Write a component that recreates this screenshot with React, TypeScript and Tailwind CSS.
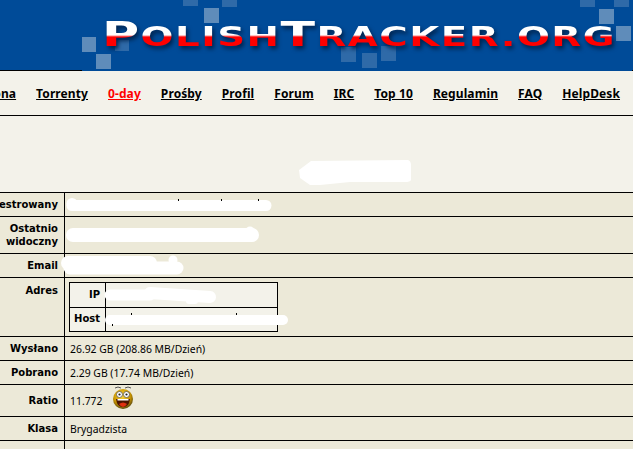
const navItems = ['Strona', 'Torrenty', '0-day', 'Prośby', 'Profil', 'Forum', 'IRC', 'Top 10', 'Regulamin', 'FAQ', 'HelpDesk'];

function HeaderSquares() {
  return (
    <svg className="absolute inset-0" width="633" height="71">
      <g fill="#5f8cba">
        <rect x="82" y="37" width="14" height="15" />
        <rect x="96" y="54" width="15" height="15" />
        <rect x="204" y="8" width="15" height="15" />
        <rect x="599" y="9" width="15" height="15" />
        <rect x="616" y="26" width="15" height="15" />
      </g>
      <g fill="#2f6aa8">
        <rect x="183" y="0" width="15" height="6" />
        <rect x="222" y="0" width="15" height="7" />
        <rect x="580" y="0" width="15" height="7" />
        <rect x="614" y="0" width="15" height="7" />
        <rect x="115" y="40" width="14" height="11" />
        <rect x="341" y="47" width="15" height="15" />
        <rect x="362" y="53" width="15" height="15" />
        <rect x="381" y="46" width="15" height="15" />
      </g>
      <rect x="0" y="70" width="82" height="1" fill="#000" />
      <rect x="632" y="70" width="1" height="1" fill="#000" />
    </svg>
  );
}

// white scribbles that hide the private values
function Scribbles() {
  return (
    <svg className="absolute inset-0" width="633" height="449">
      <path d="M299 170 L311 161 L408 160 Q411 161 411 165 L411 180 Q410 182 405 182 L350 182 L320 185 L310 185 L300 178 Z" fill="#fff" />
      <g stroke="#fff" strokeLinecap="round" fill="none">
        <path d="M72 205.5 L266 205.5" strokeWidth="11" />
        <path d="M73 235 L252 235" strokeWidth="14" />
        <path d="M68 263 L150 263" strokeWidth="14" />
        <path d="M70 268 L177 268" strokeWidth="13" />
        <path d="M110 295 L150 295" strokeWidth="11" />
        <path d="M150 293 L210 297" strokeWidth="12" />
        <path d="M110 320 L283 320" strokeWidth="10" />
      </g>
      <circle cx="72" cy="203.5" r="5.5" fill="#fff" />
      <circle cx="250" cy="231" r="4.5" fill="#fff" />
      <circle cx="173" cy="260" r="4.5" fill="#fff" />
      <rect x="186" y="296" width="12" height="8" rx="3" fill="#fff" />
      <g fill="#000">
        <rect x="178" y="199" width="1" height="2" />
        <rect x="221" y="199" width="1" height="2" />
        <rect x="258" y="199" width="1" height="2" />
        <rect x="131" y="313" width="1" height="2" />
        <rect x="236" y="313" width="1" height="2" />
        <rect x="112" y="324" width="1" height="2" />
      </g>
    </svg>
  );
}

function Smiley() {
  return (
    <svg width="22" height="24" viewBox="0 0 22 24">
      <defs>
        <radialGradient id="face" cx="0.45" cy="0.35" r="0.65">
          <stop offset="0" stopColor="#ffd83a" />
          <stop offset="0.65" stopColor="#c89400" />
          <stop offset="1" stopColor="#5c4a10" />
        </radialGradient>
      </defs>
      <path d="M3 2 Q6 0 9 2 M13 2 Q16 0 19 2" stroke="#555" strokeWidth="1" fill="none" />
      <circle cx="11" cy="13" r="10" fill="url(#face)" />
      <ellipse cx="7.5" cy="8.5" rx="3" ry="3" fill="#fff" stroke="#444" strokeWidth="0.7" />
      <ellipse cx="14.5" cy="8.5" rx="3" ry="3" fill="#fff" stroke="#444" strokeWidth="0.7" />
      <circle cx="7.5" cy="8.5" r="1.1" fill="#222" />
      <circle cx="14.5" cy="8.5" r="1.1" fill="#222" />
      <path d="M4 13 L18 13 Q17 21 11 21 Q5 21 4 13 Z" fill="#4a1400" />
      <path d="M7 18 Q11 15 15 18 Q13 21 11 21 Q9 21 7 18 Z" fill="#e03010" />
      <rect x="5.5" y="13" width="11" height="1.5" fill="#fff" />
    </svg>
  );
}

function Row({ label, children, className, top }: { label: React.ReactNode; children?: React.ReactNode; className: string; top?: boolean }) {
  return (
    <div className={`flex border-b border-black ${className}`}>
      <div className={`w-[65px] shrink-0 border-r border-black flex justify-end pr-[6px] font-bold text-[10px] leading-[13px] text-right whitespace-nowrap ${top ? 'pt-[6px]' : 'items-center'}`}>
        <span>{label}</span>
      </div>
      <div className={`flex-1 flex pl-[5px] font-['Noto_Sans',sans-serif] text-[10.4px] leading-[14px] ${top ? '' : 'items-center'}`}>{children}</div>
    </div>
  );
}

function HostRow({ label, last }: { label: string; last?: boolean }) {
  return (
    <div className={`flex flex-1 ${last ? '' : 'border-b border-black'}`}>
      <div className="w-[36px] shrink-0 border-r border-black flex items-center justify-end pr-[5px] font-bold text-[10px]">{label}</div>
      <div className="flex-1" />
    </div>
  );
}

export default function App() {
  return (
    <div className="relative w-[633px] h-[449px] overflow-hidden bg-[#f3f2ea] text-black font-['DejaVu_Sans',sans-serif]">
      <div className="relative h-[71px] bg-[#004b98] overflow-hidden">
        <HeaderSquares />
        <div className="relative pt-[15px] pl-[102px] drop-shadow-[2px_3px_2px_#00234d]">
          <div className="w-[520px] origin-left scale-x-[1.49] font-bold text-[26px] leading-[38px] whitespace-nowrap uppercase tracking-[1px] text-transparent bg-clip-text bg-[linear-gradient(#fff_0,#fff_20px,#ff0000_22px,#ff0000_100%)]">
            <span className="text-[34px]">P</span>olish<span className="text-[34px]">T</span>racker.org
          </div>
        </div>
      </div>
      <div className="h-[45px] flex justify-end gap-[20px] pr-[13px] pt-[16px] border-b border-black font-['Noto_Sans',sans-serif] text-[12px] tracking-[0.1px] leading-[14px] font-bold whitespace-nowrap">
        {navItems.map((item) => (
          <a key={item} className={`underline ${item === '0-day' ? 'text-[#ff0000]' : ''}`}>{item}</a>
        ))}
      </div>
      <div className="h-[77px] border-b border-black" />
      <div className="bg-[#ece9d8]">
        <Row label="Zarejestrowany" className="h-[24px]" />
        <Row label={<>Ostatnio<br />widoczny</>} className="h-[37px]" />
        <Row label="Email" className="h-[24px]" />
        <Row label="Adres" className="h-[59px]" top>
          <div className="mt-[4px] -ml-[1px] w-[209px] h-[50px] border border-black bg-[#f3f2ea] flex flex-col font-['DejaVu_Sans',sans-serif]">
            <HostRow label="IP" />
            <HostRow label="Host" last />
          </div>
        </Row>
        <Row label="Wysłano" className="h-[24px]">26.92 GB (208.86 MB/Dzień)</Row>
        <Row label="Pobrano" className="h-[24px]">2.29 GB (17.74 MB/Dzień)</Row>
        <Row label="Ratio" className="h-[32px]">
          <span>11.772</span>
          <span className="ml-[9px] -mt-[6px]"><Smiley /></span>
        </Row>
        <Row label="Klasa" className="h-[24px]">Brygadzista</Row>
        <Row label="" className="h-[24px]" />
      </div>
      <Scribbles />
    </div>
  );
}
